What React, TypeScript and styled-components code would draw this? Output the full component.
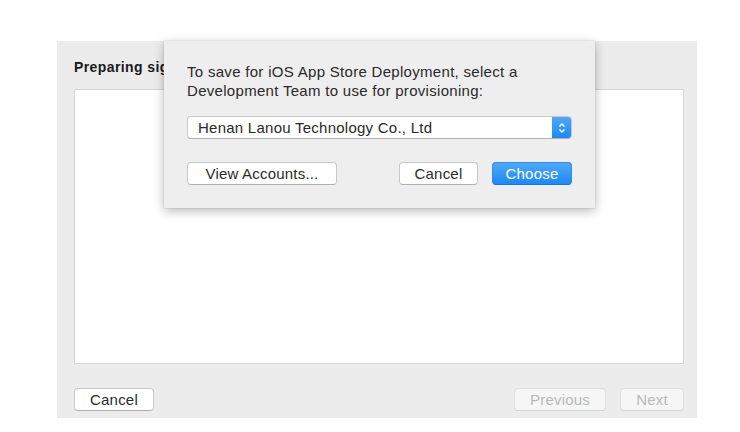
import styled, { createGlobalStyle } from 'styled-components';

const GlobalStyle = createGlobalStyle`
  html, body {
    margin: 0;
    padding: 0;
    background: #ffffff;
    font-family: "Liberation Sans", Arial, sans-serif;
  }
`;

const Page = styled.div`
  width: 740px;
  height: 432px;
  padding: 41px 0 0 57px;
  box-sizing: border-box;
`;

const Panel = styled.div`
  position: relative;
  width: 640px;
  height: 377px;
  background: #ececec;
  box-sizing: border-box;
  padding: 0 13px 7px 17px;
  display: flex;
  flex-direction: column;
`;

/* the sheet covers the rest of the title, so it is clipped at the sheet's left edge */
const Title = styled.div`
  height: 48px;
  width: 90px;
  overflow: hidden;
  display: flex;
  align-items: center;
  padding-top: 4px;
  box-sizing: border-box;
  font-size: 14px;
  letter-spacing: 0.4px;
  font-weight: bold;
  color: #1a1a1a;
  white-space: nowrap;
`;

const ContentBox = styled.div`
  flex: 1;
  background: #ffffff;
  border: 1px solid #d6d6d6;
`;

const Footer = styled.div`
  height: 47px;
  display: flex;
  align-items: flex-end;
  gap: 14px;
  box-sizing: border-box;
`;

const Spacer = styled.div`
  flex: 1;
`;

const Button = styled.button<{ $width: number; $disabled?: boolean; $primary?: boolean }>`
  width: ${(p) => p.$width}px;
  height: 23px;
  box-sizing: border-box;
  border-radius: 4px;
  font-family: "Liberation Sans", Arial, sans-serif;
  font-size: 15px;
  letter-spacing: 0.2px;
  padding: 0;
  cursor: default;
  color: ${(p) => (p.$primary ? '#ffffff' : p.$disabled ? '#b9b9b9' : '#2b2b2b')};
  background: ${(p) =>
    p.$primary ? 'linear-gradient(#4fa8f7, #1d89f4)' : p.$disabled ? '#f6f6f6' : '#ffffff'};
  border: 1px solid ${(p) => (p.$primary ? '#2f8ef0' : p.$disabled ? '#dedede' : '#c8c8c8')};
  border-bottom-color: ${(p) => (p.$primary ? '#1a74d8' : p.$disabled ? '#d4d4d4' : '#b0b0b0')};
`;

const Sheet = styled.div`
  position: absolute;
  top: 0;
  left: 107px;
  width: 431px;
  height: 167px;
  background: #eeeeee;
  box-sizing: border-box;
  padding: 21px 23px 0 23px;
  box-shadow: 0 3px 10px rgba(0, 0, 0, 0.28), 0 0 1px rgba(0, 0, 0, 0.25);
  display: flex;
  flex-direction: column;
`;

const Message = styled.div`
  font-size: 15px;
  letter-spacing: 0.3px;
  line-height: 19px;
  color: #2a2a2a;
`;

const Popup = styled.div`
  margin-top: 16px;
  height: 23px;
  width: 385px;
  display: flex;
  box-sizing: border-box;
  border: 1px solid #c8c8c8;
  border-bottom-color: #b0b0b0;
  border-radius: 4px;
  background: #ffffff;
  overflow: hidden;
`;

const PopupLabel = styled.div`
  flex: 1;
  display: flex;
  align-items: center;
  padding-left: 10px;
  font-size: 15px;
  letter-spacing: 0.25px;
  color: #2a2a2a;
`;

const Stepper = styled.div`
  width: 19px;
  background: linear-gradient(#4fa8f7, #1d89f4);
  display: flex;
  align-items: center;
  justify-content: center;
`;

const SheetButtons = styled.div`
  margin-top: 23px;
  display: flex;
  gap: 14px;
  width: 385px;
`;

export default function App() {
  return (
    <>
      <GlobalStyle />
      <Page>
        <Panel>
          <Title>Preparing signing identities...</Title>
          <ContentBox />
          <Footer>
            <Button $width={80}>Cancel</Button>
            <Spacer />
            <Button $width={92} $disabled>Previous</Button>
            <Button $width={64} $disabled>Next</Button>
          </Footer>
          <Sheet>
            <Message>
              To save for iOS App Store Deployment, select a
              <br />
              Development Team to use for provisioning:
            </Message>
            <Popup>
              <PopupLabel>Henan Lanou Technology Co., Ltd</PopupLabel>
              <Stepper>
                <svg width="8" height="12" viewBox="0 0 8 12">
                  <path d="M1.5 4.5 L4 2 L6.5 4.5 M1.5 7.5 L4 10 L6.5 7.5" fill="none" stroke="#fff" strokeWidth="1.4" />
                </svg>
              </Stepper>
            </Popup>
            <SheetButtons>
              <Button $width={150}>View Accounts...</Button>
              <Spacer />
              <Button $width={79}>Cancel</Button>
              <Button $width={80} $primary>Choose</Button>
            </SheetButtons>
          </Sheet>
        </Panel>
      </Page>
    </>
  );
}
